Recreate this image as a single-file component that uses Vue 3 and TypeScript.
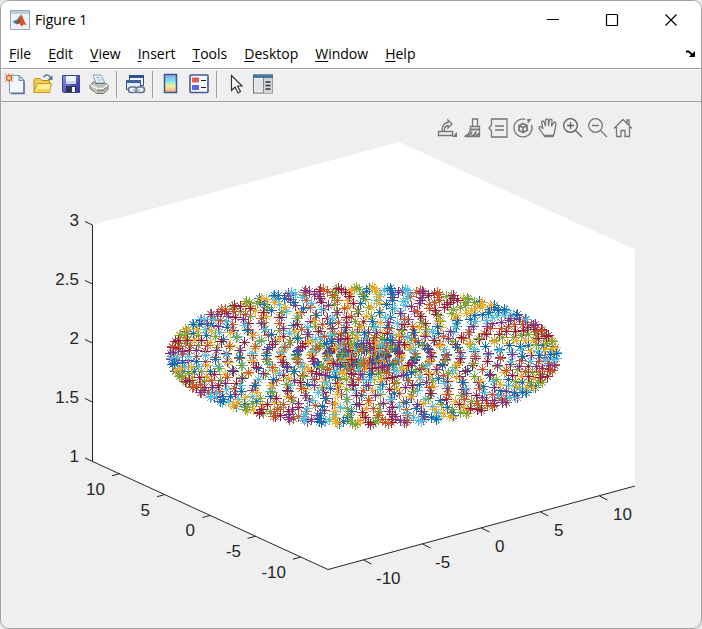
<script setup lang="ts">
interface MenuEntry { key: string; rest: string }
interface Star { plus: string; diag: string; under: string; color: string }
interface Label { text: string; x: number; y: number; anchor: 'start' | 'end' }

const menus: MenuEntry[] = ['File', 'Edit', 'View', 'Insert', 'Tools', 'Desktop', 'Window', 'Help']
  .map((name) => ({ key: name[0], rest: name.slice(1) }))

const palette = ['#0072bd', '#d95319', '#edb120', '#7e2f8e', '#77ac30', '#4dbeee', '#a2142f']

// Screen position of a data point under the orthographic camera.
function project(x: number, y: number, z: number): [number, number] {
  return [363.75 + 11.8 * x - 9.05 * y, 356 - 3.2 * x - 4.17 * y - 117.75 * (z - 2)]
}

// Reachable points of a planar two-link arm, both joints swept in 10 degree steps.
// Each point is plotted twice, so the colour order advances by two.
const L1 = 6
const L2 = 7
const stars: Star[] = []
let n = 0
for (let t1 = 0; t1 <= 360; t1 += 10) {
  for (let t2 = 0; t2 <= 360; t2 += 10) {
    const a = (t1 * Math.PI) / 180
    const b = ((t1 + t2) * Math.PI) / 180
    const [px, py] = project(L1 * Math.cos(a) + L2 * Math.cos(b), L1 * Math.sin(a) + L2 * Math.sin(b), 2)
    const sx = Math.floor(px)
    const sy = Math.floor(py)
    stars.push({
      plus: `M${sx - 5} ${sy}h11v1h-11zM${sx} ${sy - 5}h1v11h-1z`,
      diag: `M${sx - 3} ${sy - 3}l7 7M${sx + 4} ${sy - 3}l-7 7`,
      under: palette[(2 * n) % 7],
      color: palette[(2 * n + 1) % 7],
    })
    n++
  }
}

const steps = [-10, -5, 0, 5, 10]
const xTicks = steps.map((v) => project(v, -13, 1))
const yTicks = steps.map((v) => project(-13, v, 1))
const zTicks = [1, 1.5, 2, 2.5, 3].map((v) => 225 + (3 - v) * 118)

const labels: Label[] = [
  ...steps.map((v, i): Label => ({ text: String(v), x: Math.round(xTicks[i][0]) + (v < 0 ? 13 : 14), y: Math.round(xTicks[i][1]) + 24, anchor: 'start' })),
  ...steps.map((v, i): Label => ({ text: String(v), x: Math.round(yTicks[i][0]) - 15, y: Math.round(yTicks[i][1]) + 21, anchor: 'end' })),
  ...[1, 1.5, 2, 2.5, 3].map((v, i): Label => ({ text: String(v), x: 79, y: zTicks[i] + 1, anchor: 'end' })),
]
</script>

<template>
  <div class="window">
    <header class="titlebar">
      <svg class="logo" width="20" height="20" viewBox="0 0 20 20">
        <rect x=".5" y=".5" width="19" height="19" fill="#eef2f6" stroke="#9aa7b4" />
        <path d="M1 1h18v3H1z" fill="#b9cbdc" />
        <path d="M2.500 11.500 7 9.500l4-5-2 7.500-2.500 2.500z" fill="#3b7ea6" />
        <path d="M11 4.500c1.500 1 3 7 6 11-2-1.500-3.500-1.500-5.500 1L9 13l-2.500 1.500z" fill="#d9531e" />
        <path d="M11 4.500c-.5 3-1.500 6-4.500 10L9 13z" fill="#6b1c1c" />
      </svg>
      <h1>Figure 1</h1>
      <div class="controls">
        <button type="button" aria-label="Minimize"><svg width="14" height="14"><path d="M1 6.500h12" /></svg></button>
        <button type="button" aria-label="Maximize"><svg width="14" height="14"><rect x="1.500" y="1.500" width="11" height="11" rx="1" /></svg></button>
        <button type="button" aria-label="Close"><svg width="14" height="14"><path d="M1.500 1.500l11 11M12.500 1.500l-11 11" /></svg></button>
      </div>
    </header>

    <nav class="menubar">
      <button v-for="m in menus" :key="m.key + m.rest" type="button"><u>{{ m.key }}</u>{{ m.rest }}</button>
      <button class="dock" type="button" aria-label="Dock figure">
        <svg width="10" height="8" viewBox="0 0 10 8"><path d="M0 1.500h2.500l3.500 3" fill="none" stroke="#000" stroke-width="2" /><path d="M9 1v6H3z" fill="#000" /></svg>
      </button>
    </nav>

    <div class="toolbar" role="toolbar">
      <button type="button" aria-label="New figure">
        <svg width="22" height="22" viewBox="0 0 22 22">
          <path d="M5.500 2.500h10l4.500 4.500v13H5.500z" fill="#f4f9ff" stroke="#8296bb" />
          <path d="M20 8v12.500H7" fill="none" stroke="#5870a5" stroke-width="1.500" />
          <path d="M15 2.500V7.500h5z" fill="#c4d6ef" stroke="#7488b4" />
          <path d="M1 1l8 8M9 1L1 9M5 0v10M0 5h10" stroke="#e7a27c" stroke-width="1.200" />
          <circle cx="5" cy="5" r="2.500" fill="#ffdca0" stroke="#d3622c" stroke-width="1.300" />
        </svg>
      </button>
      <button type="button" aria-label="Open file">
        <svg width="22" height="22" viewBox="0 0 22 22">
          <path d="M2 19V6.500l1-1h5l2 2h7.500V19z" fill="#f1cf56" stroke="#b98d1a" />
          <path d="M2 19.500l3.500-9H19.500l-2 9z" fill="#ffee94" stroke="#c39a22" />
          <path d="M5 16h13l-.700 3H3.500z" fill="#f5d24e" />
          <path d="M11.500 4c2.500-3 6-2.500 7.500 1.500" fill="none" stroke="#5f7892" stroke-width="1.500" />
          <path d="M20.500 2v5h-5z" fill="#5f7892" />
        </svg>
      </button>
      <button type="button" aria-label="Save figure">
        <svg width="22" height="22" viewBox="0 0 22 22">
          <defs><linearGradient id="disk" x2="1" y2="1"><stop stop-color="#8c94e8" /><stop offset="1" stop-color="#2929a0" /></linearGradient></defs>
          <path d="M2.500 2.500h17v17h-16l-1-1z" fill="url(#disk)" stroke="#3d41a5" />
          <path d="M6 3h10v8H6z" fill="#f0f4ff" />
          <path d="M6 8h10v3H6z" fill="#ccd6ef" />
          <path d="M6 13h10v6H6z" fill="#30334f" />
          <path d="M12 14h3v5h-3z" fill="#eef0f5" />
        </svg>
      </button>
      <button type="button" aria-label="Print figure">
        <svg width="22" height="22" viewBox="0 0 22 22">
          <path d="M5 2h8l4 8H8z" fill="#e5f1fb" stroke="#8a9db2" />
          <path d="M8 4.500h4M9 7h5" stroke="#a0b3cc" />
          <path d="M2 12l4-3.500 1.500 2h9l3.500 1v5l-4.500 4H9l-7-5z" fill="#bfbfba" stroke="#72726e" />
          <path d="M2.500 12L9 15.500h6.500l4-4" fill="none" stroke="#f5f5f2" stroke-width="1.500" />
          <path d="M9 17.500h6l3.500-3" fill="none" stroke="#8a8a86" stroke-width="1.500" />
          <path d="M6 17l3 2.500" stroke="#d8cd9a" stroke-width="1.200" />
        </svg>
      </button>
      <span class="sep"></span>
      <button type="button" aria-label="Link plot">
        <svg width="22" height="22" viewBox="0 0 22 22">
          <path d="M5.500 2.500h14v10h-14z" fill="#f3f7fc" stroke="#2d4f91" />
          <path d="M5 2h15v3H5z" fill="#2f5595" />
          <path d="M2.500 7.500h14v9h-14z" fill="#e6edf6" stroke="#2d4f91" />
          <path d="M2 7h15v3H2z" fill="#3b629f" />
          <rect x="4.500" y="14" width="8.500" height="5.500" rx="2.700" fill="#eff3f7" stroke="#5e7893" stroke-width="1.700" />
          <rect x="12" y="14" width="8.500" height="5.500" rx="2.700" fill="#eff3f7" stroke="#5e7893" stroke-width="1.700" />
          <path d="M9 16.800h7" stroke="#91aac0" stroke-width="1.600" />
        </svg>
      </button>
      <span class="sep"></span>
      <button type="button" aria-label="Insert colorbar">
        <svg width="22" height="22" viewBox="0 0 22 22">
          <defs><linearGradient id="bar" x2="0" y2="1"><stop stop-color="#8b9de4" /><stop offset=".35" stop-color="#82e1ee" /><stop offset=".65" stop-color="#f3ef9d" /><stop offset="1" stop-color="#f1a184" /></linearGradient></defs>
          <rect x="4.500" y="1.500" width="12" height="18" fill="url(#bar)" stroke="#3d568c" stroke-width="1.500" />
        </svg>
      </button>
      <button type="button" aria-label="Insert legend">
        <svg width="22" height="22" viewBox="0 0 22 22">
          <rect x="2" y="2" width="18" height="17.500" rx="1" fill="#f8faff" stroke="#435a91" stroke-width="1.600" />
          <path d="M4 4.500h7v5H4z" fill="#e15b5f" />
          <path d="M4 12h7v5H4z" fill="#5964e2" />
          <path d="M13 7.500h5M13 14.500h5" stroke="#222" stroke-width="1.200" />
        </svg>
      </button>
      <span class="sep"></span>
      <button type="button" aria-label="Edit plot">
        <svg width="22" height="22" viewBox="0 0 22 22">
          <path d="M7.500 2.500v15l3.500-3.500 3 6 2.500-1.500-3-5.500h4.500z" fill="#fff" stroke="#333" stroke-width="1.200" />
        </svg>
      </button>
      <button type="button" aria-label="Open property inspector">
        <svg width="22" height="22" viewBox="0 0 22 22">
          <rect x="1.500" y="2" width="19" height="18" fill="#f2f3f4" stroke="#666c70" />
          <path d="M1 1.500h20v3.500H1z" fill="#457a9f" />
          <path d="M3 6h8v12H3z" fill="#e1e3e5" />
          <path d="M12 5h8.500v15H12z" fill="#d0d3d5" />
          <path d="M11.500 5v15" stroke="#858b90" />
          <path d="M13.500 9h5M13.500 12.500h5M13.500 16h5" stroke="#333" stroke-width="1.300" />
        </svg>
      </button>
    </div>

    <main class="figure">
      <svg class="plot" viewBox="1 102 700 526" role="img" aria-label="3-D scatter plot">
        <path d="M92.500 225L399 142L635 249.500V486L328 569.500L92.500 461z" fill="#fff" />
        <g class="axis">
          <path d="M92.500 225V461" />
          <path d="M85 458L328 569.500L635 486" />
          <path v-for="z in zTicks.slice(1)" :key="z" :d="`M92.500 ${z}l-7.500 -3.500`" />
          <path v-for="t in xTicks" :key="t[0]" :d="`M${t[0]} ${t[1]}l8 4`" />
          <path v-for="t in yTicks" :key="t[0]" :d="`M${t[0]} ${t[1]}l-8 2.200`" />
        </g>
        <g v-for="(s, i) in stars" :key="i" class="star">
          <path :d="s.diag" :stroke="s.under" />
          <path :d="s.diag" :stroke="s.color" />
          <path :d="s.plus" :fill="s.color" />
        </g>
        <text v-for="(l, i) in labels" :key="i" :x="l.x" :y="l.y" :text-anchor="l.anchor">{{ l.text }}</text>
      </svg>

      <div class="axtools" role="toolbar">
        <button type="button" aria-label="Export">
          <svg width="22" height="22" viewBox="0 0 22 22"><path d="M1.500 14.500h14v4h-14z" /><path d="M5 14c0-6 3-8.500 6-8.500V3l4 4-4 4V8.500c-3 0-3.500 2-4 5.500" /><path d="M20 15v5h-5z" class="tip" /></svg>
        </button>
        <button type="button" aria-label="Brush">
          <svg width="22" height="22" viewBox="0 0 22 22"><path d="M10.500 2h5v7.500h-5zM8.500 9.500h9v3h-9z" /><path d="M8.500 12.500h9V19.500H2.500c4-1.500 5-3.500 6-7z" /><path d="M3 19c4 0 6-2 7-4.500M9 19c3 0 4.500-2 5-4.500M14 19c1.500-.5 2.500-1.500 3-3" stroke-width="2" /></svg>
        </button>
        <button type="button" aria-label="Data tips">
          <svg width="22" height="22" viewBox="0 0 22 22"><path d="M4.500 2H20v18H4.500v-6L2 11l2.500-3zM8 9h9M8 13h9" /></svg>
        </button>
        <button type="button" aria-label="Rotate 3D">
          <svg width="22" height="22" viewBox="0 0 22 22"><path d="M13.500 2.300A9 9 0 1 0 19.500 8" /><path d="M15 2h4.500L16 6.500z" class="tip" /><path d="M11 6.500l4 2v5L11 15.500l-4-2v-5zM7 8.500l4 2 4-2M11 10.500v5" stroke-width="1.800" /></svg>
        </button>
        <button type="button" aria-label="Pan">
          <svg width="22" height="22" viewBox="0 0 22 22"><path d="M7.500 19.500c-1-3-4-5-5.500-8.500 0-2 2-2 4 1L4.500 5.500c0-2 2.200-2 2.800 0L8.500 9V3.500c0-2 2.700-2 2.900 0V9l1-5.500c.4-2 2.800-1.500 2.600.5L14.500 9.500l2-3.500c1-1.500 3-.5 2.500 1-1 4-1 9-3 12.500z" /><path d="M7 18.800h9.500" stroke-width="2" /></svg>
        </button>
        <button type="button" aria-label="Zoom in">
          <svg width="22" height="22" viewBox="0 0 22 22" class="dark"><circle cx="8.500" cy="8.500" r="6.800" /><path d="M13.500 13.500L20 20M5 8.500h7M8.500 5v7" /></svg>
        </button>
        <button type="button" aria-label="Zoom out">
          <svg width="22" height="22" viewBox="0 0 22 22"><circle cx="8.500" cy="8.500" r="6.800" /><path d="M13.500 13.500L20 20M5 8.500h7" /></svg>
        </button>
        <button type="button" aria-label="Restore view">
          <svg width="22" height="22" viewBox="0 0 22 22"><path d="M2 11.500l9-9 9 9M4.500 10v9.500H9v-6h4v6h4.500V10M17 8.500V3h-2v3" /></svg>
        </button>
      </div>
    </main>
  </div>
</template>

<style>
body {
  margin: 0;
  background: #e9e9e9;
}
</style>

<style scoped>
.window {
  box-sizing: border-box;
  min-height: 100vh;
  border: 1px solid #a3a3a3;
  border-radius: 9px;
  overflow: hidden;
  background: #efefef;
  color: #000;
  font: 14px/20px "Open Sans", "Noto Sans", sans-serif;
}
button {
  padding: 0;
  border: 0;
  background: none;
  color: inherit;
  font: inherit;
}
svg {
  display: block;
}
.titlebar {
  display: flex;
  align-items: center;
  height: 38px;
  padding-left: 9px;
  background: #fff;
}
h1 {
  margin: 0 0 0 5px;
  font-size: 14px;
  font-weight: 400;
}
.controls {
  display: flex;
  margin: 0 1px 0 auto;
}
.controls button {
  display: grid;
  place-items: center;
  width: 59px;
  height: 38px;
}
.controls svg {
  fill: none;
  stroke: #000;
  stroke-width: 1.2;
}
.menubar {
  display: flex;
  align-items: center;
  gap: 17px;
  height: 29px;
  padding: 0 5px 0 8px;
  border-bottom: 1px solid #a0a0a0;
  background: #fff;
}
.menubar u {
  text-underline-offset: 2px;
}
.dock {
  margin-left: auto;
}
.toolbar {
  box-sizing: border-box;
  display: flex;
  align-items: center;
  height: 33px;
  padding-bottom: 3px;
  border-top: 1px solid #fff;
  border-bottom: 1px solid #a0a0a0;
}
.toolbar button {
  display: grid;
  place-items: center;
  width: 28px;
  height: 28px;
}
.sep {
  box-sizing: border-box;
  align-self: flex-end;
  width: 8px;
  height: 27px;
  padding-left: 3px;
}
.sep::before {
  content: "";
  display: block;
  width: 1px;
  height: 100%;
  background: #a0a0a0;
}
.figure {
  position: relative;
}
.plot {
  width: 100%;
  height: auto;
}
.plot text {
  fill: #262626;
  font: 17px "Liberation Sans", Arial, sans-serif;
}
.axis {
  fill: none;
  stroke: #262626;
  stroke-width: 1;
}
.star path {
  stroke-width: 0.6;
}
.axtools {
  position: absolute;
  top: 15px;
  right: 67px;
  display: flex;
  gap: 3px;
}
.axtools svg {
  fill: none;
  stroke: #777;
  stroke-width: 1.3;
}
.axtools .dark {
  stroke: #5c5c5c;
}
.axtools .tip {
  fill: #777;
  stroke: none;
}
</style>
